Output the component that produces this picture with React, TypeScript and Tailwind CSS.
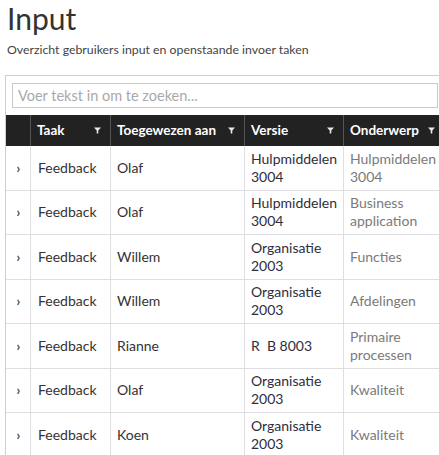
import React from "react";

const rows = [
  { name: "Olaf", versie: ["Hulpmiddelen", "3004"], onderwerp: ["Hulpmiddelen", "3004"] },
  { name: "Olaf", versie: ["Hulpmiddelen", "3004"], onderwerp: ["Business", "application"] },
  { name: "Willem", versie: ["Organisatie", "2003"], onderwerp: ["Functies"] },
  { name: "Willem", versie: ["Organisatie", "2003"], onderwerp: ["Afdelingen"] },
  { name: "Rianne", versie: ["R\u00a0\u00a0B 8003"], onderwerp: ["Primaire", "processen"] },
  { name: "Olaf", versie: ["Organisatie", "2003"], onderwerp: ["Kwaliteit"] },
  { name: "Koen", versie: ["Organisatie", "2003"], onderwerp: ["Kwaliteit"] },
];

function Funnel() {
  return (
    <svg width="7" height="7" viewBox="0 0 7 7" className="shrink-0">
      <path d="M0 0.5 H7 L4.3 3.5 V6.5 H2.7 V3.5 Z" fill="#e8e8e8" />
    </svg>
  );
}

function HeadCell({ label, w, last }: { label: string; w: string; last?: boolean }) {
  return (
    <div className={`${w} h-full flex items-center justify-between pl-[6px] pr-[9px] ${last ? "" : "border-r border-[#555]"}`}>
      <span className="font-bold text-[13.5px] text-white">{label}</span>
      <Funnel />
    </div>
  );
}

export default function App() {
  return (
    <div className="w-[439px] h-[455px] overflow-hidden bg-white" style={{ fontFamily: "Lato, 'Open Sans', sans-serif" }}>
      <h1 className="pl-[7px] pt-[0px] text-[30px] leading-[36px] text-[#333] font-normal">Input</h1>
      <p className="pl-[7px] mt-[6px] text-[12.3px] leading-[16px] text-[#444]">
        Overzicht gebruikers input en openstaande invoer taken
      </p>
      <div className="ml-[5px] mt-[17px] w-[470px] border-l border-t border-[#cfcfcf] pt-[7px] pl-[6px]">
        <div className="w-[426px] h-[25px] border border-[#c9c9c9] flex items-center pl-[5px] text-[14.5px] text-[#a9a9a9]">
          Voer tekst in om te zoeken...
        </div>
        <div className="-ml-[6px] mt-[7px] flex h-[31px] bg-[#222]">
          <div className="w-[25px] h-full border-r border-[#555]" />
          <HeadCell label="Taak" w="w-[80px]" />
          <HeadCell label="Toegewezen aan" w="w-[134px]" />
          <HeadCell label="Versie" w="w-[99px]" />
          <HeadCell label="Onderwerp" w="w-[100px]" last />
        </div>
        <div className="-ml-[6px]">
          {rows.map((r, i) => (
            <div key={i} className="flex h-[44.5px] border-b border-[#dedee3] text-[14px] leading-[18px]">
              <div className="w-[25px] flex items-center justify-center border-r border-[#dedee3] text-[#444] text-[13px] font-bold pl-[1px]">
                ›
              </div>
              <div className="w-[80px] flex items-center pl-[7px] border-r border-[#dedee3] text-[#333]">Feedback</div>
              <div className="w-[134px] flex items-center pl-[6px] border-r border-[#dedee3] text-[#333]">{r.name}</div>
              <div className="w-[99px] flex flex-col justify-center pl-[6px] border-r border-[#dedee3] text-[#2e2e3c]">
                {r.versie.map((t, j) => (
                  <span key={j}>{t}</span>
                ))}
              </div>
              <div className="w-[120px] flex flex-col justify-center pl-[6px] text-[#7a7a7a]">
                {r.onderwerp.map((t, j) => (
                  <span key={j}>{t}</span>
                ))}
              </div>
            </div>
          ))}
        </div>
      </div>
    </div>
  );
}
